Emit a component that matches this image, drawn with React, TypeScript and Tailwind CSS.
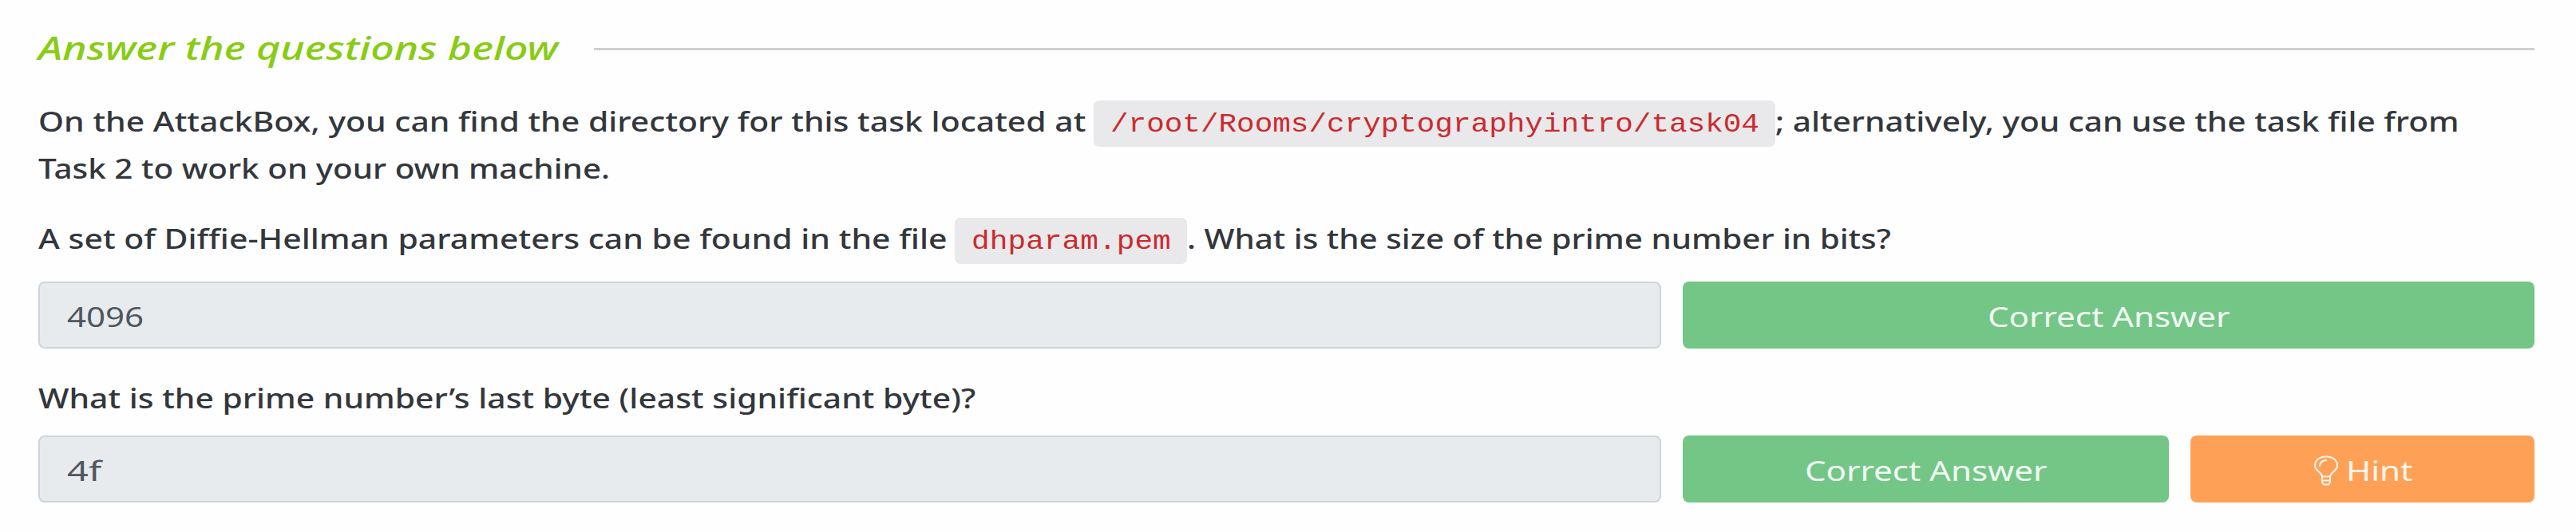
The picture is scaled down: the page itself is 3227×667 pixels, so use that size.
import { useLayoutEffect, useRef, useState } from "react";

type FitProps = { children: string; width: number; className?: string };

/** Single-line text stretched horizontally to fill an exact width. */
function Fit({ children, width, className = "" }: FitProps) {
  const ref = useRef<HTMLSpanElement>(null);
  const [scale, setScale] = useState(1);
  useLayoutEffect(() => {
    if (ref.current) setScale(width / ref.current.offsetWidth);
  }, [width, children]);
  return (
    <span className={`block shrink-0 whitespace-pre text-left ${className}`} style={{ width }}>
      <span ref={ref} className="inline-block origin-left" style={{ transform: `scaleX(${scale})` }}>
        {children}
      </span>
    </span>
  );
}

function Code({ children, width }: { children: string; width: number }) {
  return (
    <code className="mt-[3px] flex h-[58px] shrink-0 items-start rounded-[7px] bg-[#e9e9eb] pl-[21px] pr-[20px] font-['Liberation_Mono',monospace] text-[33px] font-normal leading-[62px] text-[#cb2b2f]">
      <Fit width={width}>{children}</Fit>
    </code>
  );
}

function Answer({ value, width }: { value: string; width: number }) {
  return (
    <div className="flex h-[84px] w-[2033px] shrink-0 items-center rounded-[8px] border-[2px] border-[#ced4da] bg-[#e8ebee] pl-[34px] pt-[3px] text-[#50575e]">
      <Fit width={width}>{value}</Fit>
    </div>
  );
}

function Bulb() {
  return (
    <svg width="32" height="38" viewBox="0 0 32 38" fill="none" stroke="currentColor" strokeWidth="2" strokeLinecap="round" strokeLinejoin="round" className="shrink-0">
      <path d="M11 26.5C10.500 21 2 19.500 2 12.500C2 6 8 1.500 16 1.500S30 6 30 12.500C30 19.500 21.500 21 21 26.500Z" />
      <path d="M8 13C8 9 11.500 6 16 6" />
      <path d="M11 26.500V33.500L13 36.500H19L21 33.500V26.500M11 31.500H21" />
    </svg>
  );
}

export default function App() {
  return (
    <main className="flex h-[667px] w-[3227px] flex-col overflow-hidden bg-[#fefefe] pl-[48px] pr-[52px] pt-[32px] font-['Noto_Sans',sans-serif] text-[35px] font-medium leading-[58px] text-[#33373c]">
      <h2 className="flex h-[58px] items-center gap-[45px] text-[40px] font-medium italic text-[#88cc14]">
        <Fit width={651} className="-mt-[3px]">Answer the questions below</Fit>
        <span className="h-[3px] flex-1 bg-[#cfcfcf]" />
      </h2>

      <div className="mt-[33px]">
        <p className="flex h-[59px] items-start">
          <Fit width={1312}>On the AttackBox, you can find the directory for this task located at</Fit>
          <span className="w-[10px]" />
          <Code width={813}>/root/Rooms/cryptographyintro/task04</Code>
          <Fit width={857}>; alternatively, you can use the task file from</Fit>
        </p>
        <p className="flex h-[58px] items-start">
          <Fit width={716}>Task 2 to work on your own machine.</Fit>
        </p>
      </div>

      <p className="mt-[30px] flex h-[58px] items-start">
        <Fit width={1138}>A set of Diffie-Hellman parameters can be found in the file</Fit>
        <span className="w-[10px]" />
        <Code width={250}>dhparam.pem</Code>
        <Fit width={882}>. What is the size of the prime number in bits?</Fit>
      </p>
      <div className="mt-[25px] flex h-[84px] items-center font-normal">
        <Answer value="4096" width={96} />
        <button className="ml-[27px] flex h-[84px] flex-1 items-center justify-center rounded-[8px] bg-[#74c687] pt-[3px] text-white/90">
          <Fit width={303}>Correct Answer</Fit>
        </button>
      </div>

      <p className="mt-[33px] flex h-[58px] items-start">
        <Fit width={1174}>What is the prime number’s last byte (least significant byte)?</Fit>
      </p>
      <div className="mt-[18px] flex h-[84px] items-center font-normal">
        <Answer value="4f" width={43} />
        <button className="ml-[27px] flex h-[84px] w-[609px] items-center justify-center rounded-[8px] bg-[#74c687] pt-[3px] text-white/90">
          <Fit width={303}>Correct Answer</Fit>
        </button>
        <button className="ml-[27px] flex h-[84px] flex-1 items-center justify-center gap-[9px] rounded-[8px] bg-[#fea156] pt-[3px] text-white/90">
          <Bulb />
          <Fit width={83}>Hint</Fit>
        </button>
      </div>
    </main>
  );
}
